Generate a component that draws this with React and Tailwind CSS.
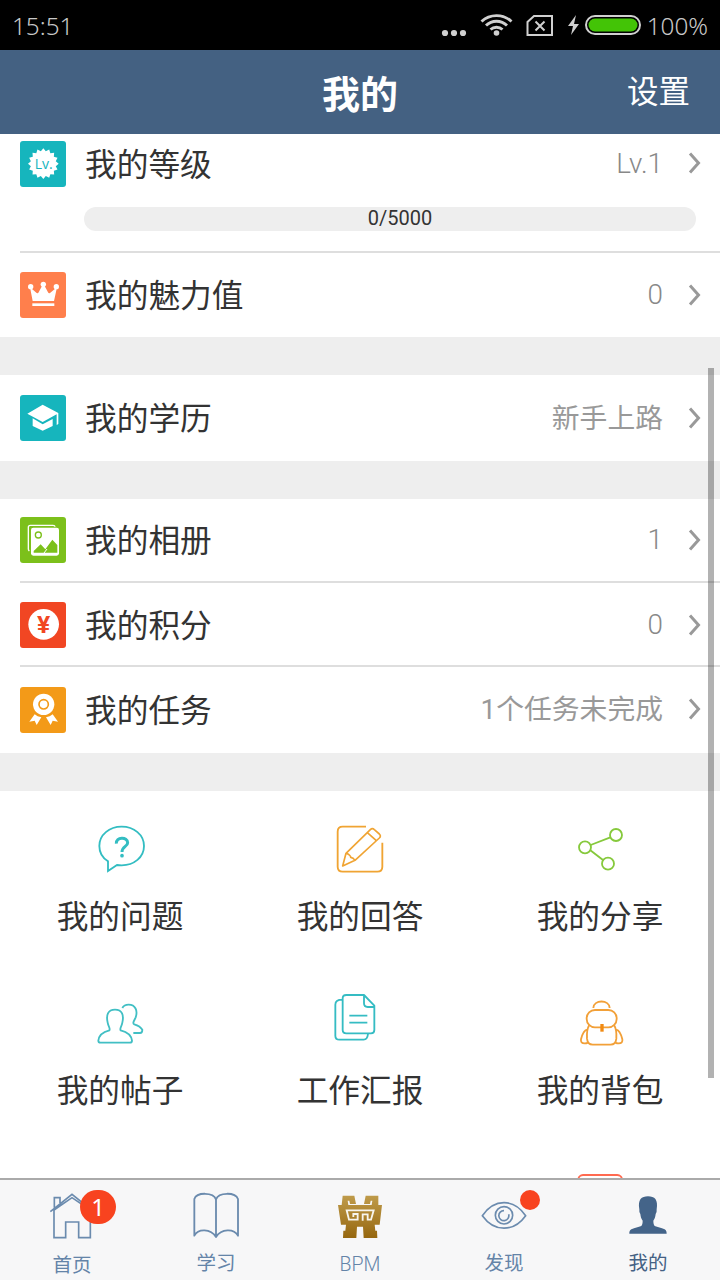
import React from "react";

const burst = Array.from({ length: 32 }, (_, i) => {
  const r = i % 2 ? 38 : 46;
  const a = (i * Math.PI) / 16 - Math.PI / 2;
  return `${(70 + r * Math.cos(a)).toFixed(1)},${(68 + r * Math.sin(a)).toFixed(1)}`;
}).join(" ");

function Tile({ className, children }) {
  return (
    <svg viewBox="0 0 138 138" className={`size-[46px] shrink-0 rounded-[3px] ${className}`} fill="#fff">
      {children}
    </svg>
  );
}

const LevelIcon = () => (
  <Tile className="bg-[#16b5bd]">
    <polygon points={burst} />
    <text x="71" y="83" textAnchor="middle" fontSize="42" fontWeight="500" fill="#16b5bd" className="font-['Open_Sans',sans-serif]">Lv.</text>
  </Tile>
);

const CrownIcon = () => (
  <Tile className="bg-[#ff7f4c]">
    <circle cx="32" cy="44" r="8" />
    <circle cx="70" cy="37" r="8" />
    <circle cx="109" cy="44" r="8" />
    <path d="M30 46 38 87H102L111 46 90 63Q86 65 84 61L74 42H66L56 61Q54 65 50 63Z" />
    <rect x="37" y="94" width="66" height="8" />
  </Tile>
);

const CapIcon = () => (
  <Tile className="bg-[#16b5bd]">
    <path d="M22 56 68 29 115 54V87L110 90V58L68 81Z" />
    <path d="M38 70 68 88 98 72V93L68 107 38 93Z" />
  </Tile>
);

const AlbumIcon = () => (
  <Tile className="bg-[#7cc01b]">
    <path d="M28 102Q25 100 25 96V31Q25 25 31 25H99Q105 25 105 29" fill="none" stroke="#fff" strokeWidth="4" />
    <rect x="33" y="32" width="84" height="84" rx="7" />
    <circle cx="55" cy="54" r="9" fill="none" stroke="#7cc01b" strokeWidth="4" />
    <path d="M41 107V102L62 82 76 97 97 68 112 84V107Z" fill="#7cc01b" />
    <path d="M72 108 81 96" stroke="#fff" strokeWidth="3" />
  </Tile>
);

const CoinIcon = () => (
  <Tile className="bg-[#f14623]">
    <circle cx="71" cy="67" r="46" />
    <text x="71" y="94" textAnchor="middle" fontSize="74" fontWeight="700" fill="#f14623" className="font-['Roboto',sans-serif]">¥</text>
  </Tile>
);

const MedalIcon = () => (
  <Tile className="bg-[#f39a18]">
    <circle cx="71" cy="52" r="32" />
    <circle cx="71" cy="52" r="14" fill="none" stroke="#f39a18" strokeWidth="5" />
    <path d="M44 82 28 104 44 101 50 114 64 91Q52 89 44 82ZM98 82 114 104 98 101 92 114 78 91Q90 89 98 82Z" />
  </Tile>
);

function Chevron() {
  return (
    <svg viewBox="0 0 14 24" className="mb-[1px] ml-[25px] h-6 w-[14px]" fill="none" stroke="#999" strokeWidth="3">
      <path d="M2 2.500 10.500 12 2 21.500" />
    </svg>
  );
}

function Row({ icon, label, value, className }) {
  const latin = /^[\w.]+$/.test(value);
  return (
    <div className={`flex items-center pl-5 pr-[18px] ${className}`}>
      {icon}
      <span className="ml-[19px] pt-[4px] text-[31.7px] leading-[46px] text-[#333]">{label}</span>
      <span className={`ml-auto text-[27.8px] leading-[46px] ${latin ? "font-light text-[#888]" : "pt-[1px] text-[#999]"}`}>{value}</span>
      <Chevron />
    </div>
  );
}

const Divider = () => <div className="ml-5 h-[2px] bg-[#dedede]" />;
const Gap = () => <div className="h-[38px] bg-[#eee]" />;

function Line({ box, color, width = 5.5, className = "", children }) {
  return (
    <svg viewBox={box} className={`size-12 overflow-visible ${className}`} fill="none" stroke={color} strokeWidth={width} strokeLinejoin="round">
      {children}
    </svg>
  );
}

const cells = [
  {
    label: "我的问题",
    icon: (
      <Line box="168 45 144 144" color="#33bdc2">
        <path d="M204 183V154C188 144 178 128 178 108C178 74 208 50 245 50S312 74 312 108S282 166 245 166Q238 166 231 165Z" strokeLinejoin="miter" />
        <path d="M229 101C227 80 263 79 263 98C263 110 246 109 246 126" strokeWidth="9" />
        <circle cx="246" cy="137" r="5.5" fill="#33bdc2" stroke="none" />
      </Line>
    ),
  },
  {
    label: "我的回答",
    icon: (
      <Line box="888 45 144 144" color="#f0a433">
        <path d="M978 50H908Q893 50 893 65V170Q893 185 908 185H1012Q1027 185 1027 170V98" />
        <path d="M908 168 918 130 991 59Q997 53 1003 59L1018 72Q1024 78 1018 84L945 151ZM918 130Q925 131 928 135Q933 140 932 142Q940 143 945 151M982 68 1009 92" strokeWidth="5" />
      </Line>
    ),
  },
  {
    label: "我的分享",
    icon: (
      <Line box="168 45 144 144" color="#86c93c">
        <circle cx="195" cy="112" r="18" />
        <circle cx="288" cy="75" r="18" />
        <circle cx="264" cy="161" r="18" />
        <path d="M212 105 271 82M211 121 249 150" />
      </Line>
    ),
  },
  {
    label: "我的帖子",
    icon: (
      <Line box="168 57 144 144" color="#41bfc4">
        <path d="M182 188Q175 188 175 182C177 162 196 154 208 151C212 146 205 140 203 128C198 106 203 89 225 89S252 106 247 128C245 140 238 146 242 151C254 154 274 162 276 182Q276 188 269 188Z" />
        <path d="M247 84C251 76 258 74 266 74C286 74 294 92 287 112C283 122 276 130 283 133C293 136 302 141 307 149Q307 159 300 159H280" />
      </Line>
    ),
  },
  {
    label: "工作汇报",
    icon: (
      <Line box="888 57 144 144" color="#35bcc3">
        <path d="M919 45H972L1003 77V150Q1003 160 993 160H919Q908 160 908 150V55Q908 45 919 45ZM972 46V70Q972 81 983 81H1002M907 59Q886 59 886 74V167Q886 179 898 179H971Q982 179 984 162" />
        <path d="M928 107H982M928 128H982" />
      </Line>
    ),
  },
  {
    label: "我的背包",
    icon: (
      <Line box="168 567 144 144" color="#f2a038">
        <path d="M220 594C220 568 269 568 269 594" />
        <rect x="200" y="600" width="90" height="52" rx="25" />
        <path d="M208 645C200 657 200 670 201 686Q203 704 218 704H272Q287 704 289 686C290 670 290 657 282 645M202 659Q190 660 183 688Q181 700 194 700Q204 700 204 695M288 659Q300 660 307 688Q309 700 296 700Q286 700 286 695" />
        <path d="M246 642V665" stroke="#f18a12" strokeWidth="10" />
      </Line>
    ),
  },
  { label: "", icon: null },
  { label: "", icon: null },
  {
    label: "",
    icon: (
      <Line box="168 38 144 144" color="#ff6a50">
        <rect x="175" y="44" width="131" height="130" rx="14" />
      </Line>
    ),
  },
];

const blue = "#6b8bae";

const tabs = [
  {
    label: "首页",
    labelClass: "text-[#6484a8] mt-[16px]",
    badge: "1",
    icon: (
      <Line box="144 96 144 144" color={blue} width={5}>
        <path d="M151 155 216 103 281 155M162 150V233H197V186H236V233H271V150M162 150 216 113 271 150M163 143V113H180V129" strokeLinejoin="miter" />
      </Line>
    ),
  },
  {
    label: "学习",
    labelClass: "text-[#6484a8] mt-[14px]",
    icon: (
      <Line box="576 96 144 144" color={blue}>
        <path d="M648 118C640 96 590 96 583 117V227C594 205 632 205 648 231C664 205 702 205 714 227V117C706 96 656 96 648 118V231" />
      </Line>
    ),
  },
  {
    label: "BPM",
    labelClass: "text-[#6484a8] mt-[15px] font-light",
    icon: (
      <svg viewBox="108 96 144 144" className="size-12">
        <defs>
          <linearGradient id="gold" x1="0" y1="0" x2="0" y2="1">
            <stop offset="0" stopColor="#bf9b4b" />
            <stop offset="1" stopColor="#96670f" />
          </linearGradient>
        </defs>
        <path
          fill="url(#gold)"
          d="M128 107H163L168 132H150L148 122H143L145 135H215L217 122H212L210 132H192L197 107H235V135H246L239 194H224L226 212H231L232 234H191L189 200H171L169 234H129L130 212H136L138 194H123L114 135H125Z"
        />
        <path d="M184 151H140L147 179H173V162H160V171M174 151H221L213 179H203V163H188V182" fill="none" stroke="#f7f5ee" strokeWidth="5.500" />
      </svg>
    ),
  },
  {
    label: "发现",
    labelClass: "text-[#6484a8] mt-[14px]",
    dot: true,
    icon: (
      <Line box="540 96 144 144" color={blue} width={5}>
        <path d="M547 167C583 115 641 115 677 167C641 217 583 217 547 167Z" />
        <circle cx="612" cy="166" r="26" />
        <path d="M612 152A15 15 0 1 0 626 163" />
      </Line>
    ),
  },
  {
    label: "我的",
    labelClass: "text-[#446184] mt-[14px]",
    icon: (
      <svg viewBox="312 96 144 144" className="size-12" fill="#446489">
        <path d="M328 221C328 211 332 208 342 205L362 199Q368 196 368 182C363 176 362 169 361 162Q357 158 358 148C353 119 364 109 384 109S415 119 410 148Q411 158 407 162C406 169 405 176 400 182Q400 196 406 199L426 205C436 208 440 211 440 221Z" />
      </svg>
    ),
  },
];

function StatusBar() {
  return (
    <div className="flex h-[50px] shrink-0 items-center bg-black pl-[12px] pr-[12px] text-[#c8c8c8]">
      <span className="pt-[3px] font-['Noto_Sans',sans-serif] text-[24.3px] font-light">15:51</span>
      <svg viewBox="0 0 210 50" className="ml-auto h-[50px] w-[210px]" fill="none" stroke="#d0d0d0">
        <g fill="#d0d0d0" stroke="none">
          <circle cx="13" cy="33" r="3.1" />
          <circle cx="22" cy="33" r="3.1" />
          <circle cx="31" cy="33" r="3.1" />
          <circle cx="64.500" cy="33" r="2.8" />
          <path d="M144 15 136 26H141L139 35 147 24H142Z" />
        </g>
        <path d="M49.500 21.500A22 22 0 0 1 79.500 21.500M54 25.500A15 15 0 0 1 75 25.500M58.500 29.500A9 9 0 0 1 70.500 29.500" strokeWidth="2.900" />
        <path d="M102 16H120V35H95.500V22ZM103.500 21.500 112.500 30.500M112.500 21.500 103.500 30.500" strokeWidth="2" />
        <rect x="154" y="16" width="54" height="18" rx="9" strokeWidth="2" />
        <rect x="156.500" y="18.500" width="49" height="13" rx="6.500" fill="#43c406" stroke="none" />
      </svg>
      <span className="ml-[5px] pt-[2px] font-['Noto_Sans',sans-serif] text-[24.3px] font-light">100%</span>
    </div>
  );
}

export default function App() {
  return (
    <div className="flex h-[1280px] w-[720px] flex-col overflow-hidden bg-white font-['Roboto','Noto_Sans_CJK_SC',sans-serif]">
      <StatusBar />
      <header className="grid h-[84px] shrink-0 grid-cols-3 items-center bg-[#446182] px-[30px] text-white">
        <h1 className="col-start-2 pt-[6px] text-center text-[38px] font-bold leading-[50px]">我的</h1>
        <span className="pt-[2px] text-right text-[31.5px] leading-[46px]">设置</span>
      </header>

      <main className="relative min-h-0 flex-1 overflow-hidden">
        <div className="h-[117px] pt-[6px]">
          <Row icon={<LevelIcon />} label="我的等级" value="Lv.1" className="h-[47px]" />
          <div className="ml-[84px] mr-6 mt-5 h-6 rounded-full bg-[#eee] pl-5 text-center text-[20px] leading-[22px] text-[#333]">0/5000</div>
        </div>
        <Divider />
        <Row icon={<CrownIcon />} label="我的魅力值" value="0" className="h-[84px]" />
        <Gap />
        <Row icon={<CapIcon />} label="我的学历" value="新手上路" className="h-[86px]" />
        <Gap />
        <Row icon={<AlbumIcon />} label="我的相册" value="1" className="h-[82px]" />
        <Divider />
        <Row icon={<CoinIcon />} label="我的积分" value="0" className="h-[82px] pt-[2px]" />
        <Divider />
        <Row icon={<MedalIcon />} label="我的任务" value="1个任务未完成" className="h-[86px] pb-[1px]" />
        <Gap />
        <div className="grid grid-cols-3">
          {cells.map((c, i) => (
            <div key={i} className="flex h-[174px] flex-col items-center pt-[34px]">
              {c.icon}
              <span className="mt-[29px] text-[31.7px] leading-8 text-[#333]">{c.label}</span>
            </div>
          ))}
        </div>
        <div className="absolute right-[6px] top-[234px] h-[710px] w-[6px] bg-black/30" />
      </main>

      <nav className="z-10 grid h-[102px] shrink-0 grid-cols-5 border-t-2 border-[#aaa] bg-[#f7f7f8]">
        {tabs.map((t) => (
          <div key={t.label} className="relative flex flex-col items-center pt-[12px]">
            {t.icon}
            <span className={`text-[19.5px] leading-5 ${t.labelClass}`}>{t.label}</span>
            {t.badge && (
              <span className="absolute left-[80px] top-[10px] flex h-[34px] w-9 items-center justify-center rounded-full bg-[#f8431f] font-['Noto_Sans',sans-serif] text-[24px] text-white">{t.badge}</span>
            )}
            {t.dot && <span className="absolute left-[88px] top-[10px] size-5 rounded-full bg-[#f8431f]" />}
          </div>
        ))}
      </nav>
    </div>
  );
}
